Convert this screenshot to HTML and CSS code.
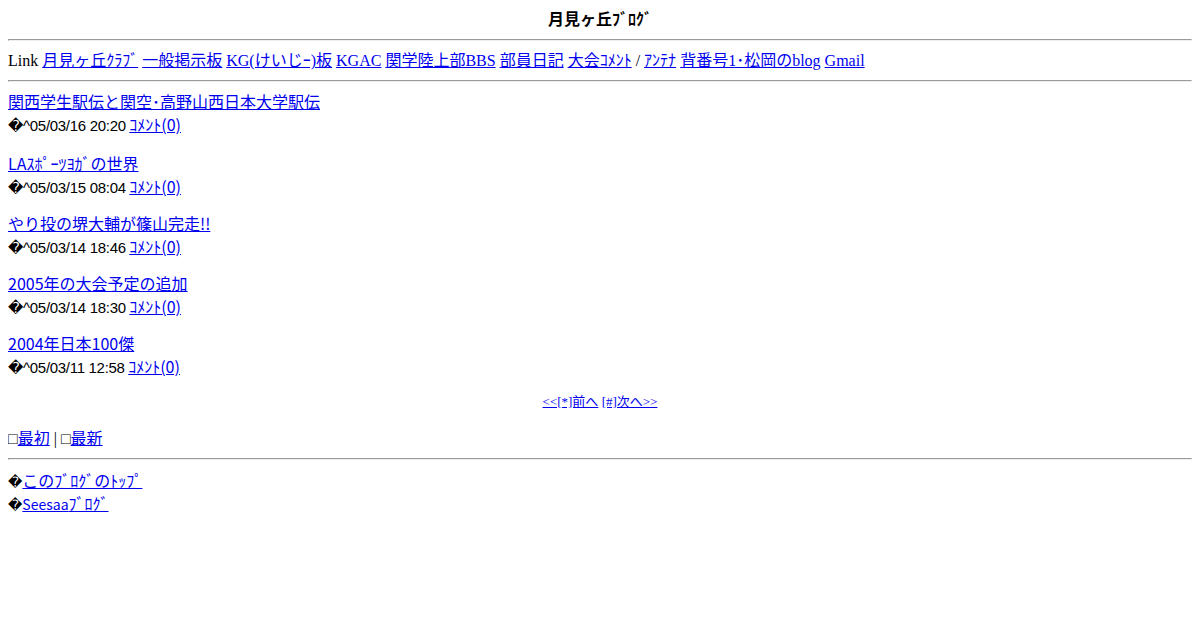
FILE: index.html
```html
<!DOCTYPE html>
<html lang="ja">

<head>
    <meta charset="UTF-8">
    <title>月見ヶ丘ﾌﾞﾛｸﾞ</title>
    <link rel="stylesheet" href="styles.css">
</head>

<body>
    <div class="blog-title">月見ヶ丘ﾌﾞﾛｸﾞ</div>
    <hr>
    <div class="links">Link <a href="#">月見ヶ丘ｸﾗﾌﾞ</a> <a href="#">一般掲示板</a> <a href="#">KG(けいじｰ)板</a> <a href="#">KGAC</a> <a href="#">関学陸上部BBS</a> <a href="#">部員日記</a> <a href="#">大会ｺﾒﾝﾄ</a> / <a href="#">ｱﾝﾃﾅ</a> <a href="#">背番号1･松岡のblog</a> <a href="#">Gmail</a></div>
    <hr>

    <div class="entry first">
        <a href="#">関西学生駅伝と関空･高野山西日本大学駅伝</a><br>
        <span class="date">�^05/03/16 20:20</span> <a href="#">ｺﾒﾝﾄ(0)</a>
    </div>
    <div class="entry">
        <a href="#">LAｽﾎﾟｰﾂﾖｶﾞの世界</a><br>
        <span class="date">�^05/03/15 08:04</span> <a href="#">ｺﾒﾝﾄ(0)</a>
    </div>
    <div class="entry">
        <a href="#">やり投の堺大輔が篠山完走!!</a><br>
        <span class="date">�^05/03/14 18:46</span> <a href="#">ｺﾒﾝﾄ(0)</a>
    </div>
    <div class="entry">
        <a href="#">2005年の大会予定の追加</a><br>
        <span class="date">�^05/03/14 18:30</span> <a href="#">ｺﾒﾝﾄ(0)</a>
    </div>
    <div class="entry">
        <a href="#">2004年日本100傑</a><br>
        <span class="date">�^05/03/11 12:58</span> <a href="#">ｺﾒﾝﾄ(0)</a>
    </div>

    <div class="pager"><a href="#">&lt;&lt;[*]前へ</a> <a href="#">[#]次へ&gt;&gt;</a></div>

    <div class="jump">□<a href="#">最初</a> | □<a href="#">最新</a></div>
    <hr>
    <div class="footer">
        <span class="mark">�</span><a href="#">このﾌﾞﾛｸﾞのﾄｯﾌﾟ</a><br>
        <span class="mark">�</span><a href="#"><span class="small">Seesaa</span>ﾌﾞﾛｸﾞ</a>
    </div>
</body>

</html>
```

FILE: styles.css
```css
body {
    font-family: "Liberation Serif", "Noto Sans CJK JP", serif;
    font-size: 16px;
    line-height: 23px;
    margin: 8px;
    color: #000;
}

a {
    color: #0000ee;
}

hr {
    margin: 8px 0;
}

.blog-title {
    text-align: center;
    font-weight: bold;
}

.entry {
    font-family: "Noto Sans CJK JP", sans-serif;
    margin-bottom: 14px;
}

.entry.first {
    margin-bottom: 16px;
}

.date {
    font-family: "Liberation Sans", "DejaVu Sans", sans-serif;
    font-size: 15px;
    letter-spacing: -0.3px;
    line-height: 1;
}

.pager {
    text-align: center;
    font-size: 13px;
    line-height: 19px;
    margin-bottom: 16px;
}

.footer {
    font-family: "Noto Sans CJK JP", sans-serif;
    padding-top: 1px;
}

.mark {
    font-family: "DejaVu Sans", sans-serif;
    font-size: 14px;
    line-height: 1;
}

.small {
    font-size: 14px;
    line-height: 1;
}
```
